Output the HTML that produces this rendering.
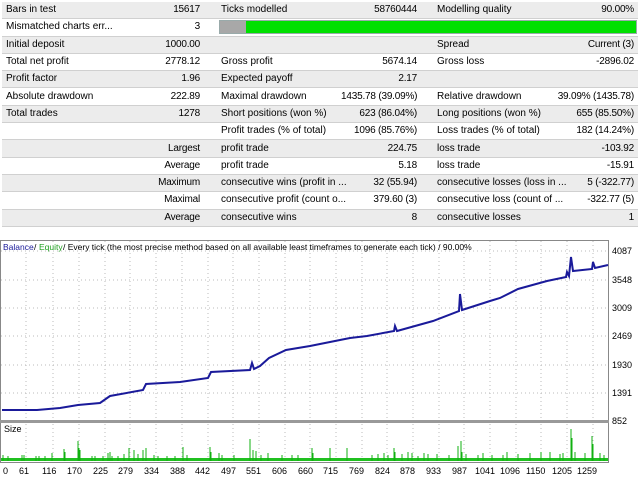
<!DOCTYPE html>
<html><head><meta charset="utf-8"><style>
body{margin:0;width:640px;height:480px;background:#fff;overflow:hidden;font-family:"Liberation Sans",sans-serif;font-size:10px;color:#000}
table{position:absolute;left:2px;top:2px;width:636px;border-collapse:collapse;table-layout:fixed}
td{height:16.3px;padding:0 3px 0 4px;border-bottom:1px solid #d0d0d0;white-space:nowrap;overflow:visible;line-height:16px}
tr:nth-child(odd) td{background:#ececec}
tr:nth-child(even) td{background:#fff}
.r{text-align:right;letter-spacing:-0.2px}
td:nth-child(2).r{padding-right:17px}
td:nth-child(4).r{padding-right:16px}
td:nth-child(6).r{padding-right:4px}
</style></head><body>
<table>
<colgroup><col style="width:130px"><col style="width:85px"><col style="width:120px"><col style="width:96px"><col style="width:120px"><col style="width:85px"></colgroup>
<tr><td>Bars in test</td><td class="r">15617</td><td>Ticks modelled</td><td class="r">58760444</td><td>Modelling quality</td><td class="r">90.00%</td></tr>
<tr><td>Mismatched charts err...</td><td class="r">3</td><td colspan="4" style="padding:0 1px 0 2px"><div style="height:12px;border:1px solid #9aa;background:#00e000;position:relative"><div style="position:absolute;left:0;top:0;width:26px;height:12px;background:#a8a8a8"></div></div></td></tr>
<tr><td>Initial deposit</td><td class="r">1000.00</td><td></td><td></td><td>Spread</td><td class="r">Current (3)</td></tr>
<tr><td>Total net profit</td><td class="r">2778.12</td><td>Gross profit</td><td class="r">5674.14</td><td>Gross loss</td><td class="r">-2896.02</td></tr>
<tr><td>Profit factor</td><td class="r">1.96</td><td>Expected payoff</td><td class="r">2.17</td><td></td><td></td></tr>
<tr><td>Absolute drawdown</td><td class="r">222.89</td><td>Maximal drawdown</td><td class="r">1435.78 (39.09%)</td><td>Relative drawdown</td><td class="r">39.09% (1435.78)</td></tr>
<tr><td>Total trades</td><td class="r">1278</td><td>Short positions (won %)</td><td class="r">623 (86.04%)</td><td>Long positions (won %)</td><td class="r">655 (85.50%)</td></tr>
<tr><td></td><td></td><td>Profit trades (% of total)</td><td class="r">1096 (85.76%)</td><td>Loss trades (% of total)</td><td class="r">182 (14.24%)</td></tr>
<tr><td></td><td class="r">Largest</td><td>profit trade</td><td class="r">224.75</td><td>loss trade</td><td class="r">-103.92</td></tr>
<tr><td></td><td class="r">Average</td><td>profit trade</td><td class="r">5.18</td><td>loss trade</td><td class="r">-15.91</td></tr>
<tr><td></td><td class="r">Maximum</td><td>consecutive wins (profit in ...</td><td class="r">32 (55.94)</td><td>consecutive losses (loss in ...</td><td class="r">5 (-322.77)</td></tr>
<tr><td></td><td class="r">Maximal</td><td>consecutive profit (count o...</td><td class="r">379.60 (3)</td><td>consecutive loss (count of ...</td><td class="r">-322.77 (5)</td></tr>
<tr><td></td><td class="r">Average</td><td>consecutive wins</td><td class="r">8</td><td>consecutive losses</td><td class="r">1</td></tr>
</table>
<svg style="position:absolute;left:0;top:0" width="640" height="480" font-family="Liberation Sans,sans-serif" font-size="9">
<rect x="0.5" y="240.5" width="608" height="222" fill="#fff" stroke="#888"/>
<g stroke="#bbb" stroke-dasharray="1,3">
<path d="M26 241V421M53 241V421M79 241V421M105 241V421M130 241V421M156 241V421M182 241V421M208 241V421M233 241V421M259 241V421M285 241V421M310 241V421M336 241V421M362 241V421M387 241V421M413 241V421M439 241V421M464 241V421M490 241V421M516 241V421M541 241V421M567 241V421M593 241V421"/>
<path d="M26 424V462M53 424V462M79 424V462M105 424V462M130 424V462M156 424V462M182 424V462M208 424V462M233 424V462M259 424V462M285 424V462M310 424V462M336 424V462M362 424V462M387 424V462M413 424V462M439 424V462M464 424V462M490 424V462M516 424V462M541 424V462M567 424V462M593 424V462"/>
<path d="M1 251H608M1 280H608M1 308H608M1 336H608M1 365H608M1 393H608"/>
</g>
<rect x="0" y="420" width="609" height="3" fill="#999"/>
<polyline fill="none" stroke="#1a1a9a" stroke-width="2" points="2,410 37,410 60,408 78,405 100,403 110,396 143,390 146,384 180,382 208,378 211,372 250,370 252,363 254,369 260,366 269,358 286,350 310,346 335,341 350,338 367,336 394,331 395,326 397,331 433,321 459,311 460,294 462,310 490,301 500,298 518,289 547,281 566,277 567,272 569,276 571,257 573,271 592,269 593,262 595,268 608,265"/>
<g fill="#000" font-size="8.5">
<text x="3" y="250" fill="#1a1a9a">Balance</text><text x="34" y="250">/</text><text x="39" y="250" fill="#20a020">Equity</text><text x="63" y="250">/ Every tick (the most precise method based on all available least timeframes to generate each tick) / 90.00%</text>
</g>
<g fill="#000" font-size="9">
<text x="612" y="254">4087</text><text x="612" y="283">3548</text><text x="612" y="311">3009</text><text x="612" y="339">2469</text><text x="612" y="368">1930</text><text x="612" y="396">1391</text><text x="612" y="424">852</text>
<text x="4" y="432">Size</text>
</g>
<rect x="1" y="458" width="607" height="3" fill="#20c020"/>
<path stroke="#10b010" stroke-width="1" d="M3 461V455M8 461V456M22 461V455M24 461V455M36 461V456M39 461V456M45 461V456M52 461V453M64 461V449M65 461V452M78 461V441M79 461V448M80 461V450M92 461V456M95 461V456M103 461V456M108 461V453M110 461V452M112 461V456M118 461V456M124 461V454M129 461V448M134 461V450M138 461V454M143 461V450M146 461V448M154 461V455M158 461V456M167 461V456M175 461V456M183 461V447M187 461V455M210 461V447M211 461V452M219 461V453M222 461V455M234 461V455M250 461V439M253 461V450M256 461V451M261 461V455M268 461V453M282 461V455M292 461V455M298 461V455M312 461V448M313 461V453M330 461V448M347 461V448M372 461V455M378 461V454M384 461V453M388 461V455M394 461V448M395 461V452M402 461V454M408 461V452M412 461V453M418 461V456M424 461V453M428 461V454M437 461V454M449 461V455M458 461V446M461 461V441M462 461V452M466 461V454M478 461V455M483 461V453M492 461V455M503 461V455M507 461V452M518 461V454M530 461V453M541 461V452M550 461V452M560 461V454M563 461V453M571 461V429M572 461V438M575 461V452M585 461V453M592 461V436M593 461V444M600 461V453M604 461V455"/>
<g fill="#000" font-size="9">
<text x="3" y="474">0</text><text x="19" y="474">61</text><text x="42" y="474">116</text><text x="67" y="474">170</text><text x="93" y="474">225</text><text x="118" y="474">279</text><text x="144" y="474">334</text><text x="170" y="474">388</text><text x="195" y="474">442</text><text x="221" y="474">497</text><text x="246" y="474">551</text><text x="272" y="474">606</text><text x="298" y="474">660</text><text x="323" y="474">715</text><text x="349" y="474">769</text><text x="375" y="474">824</text><text x="400" y="474">878</text><text x="426" y="474">933</text><text x="452" y="474">987</text><text x="475" y="474">1041</text><text x="500" y="474">1096</text><text x="526" y="474">1150</text><text x="552" y="474">1205</text><text x="577" y="474">1259</text>
</g>
</svg>
</body></html>
